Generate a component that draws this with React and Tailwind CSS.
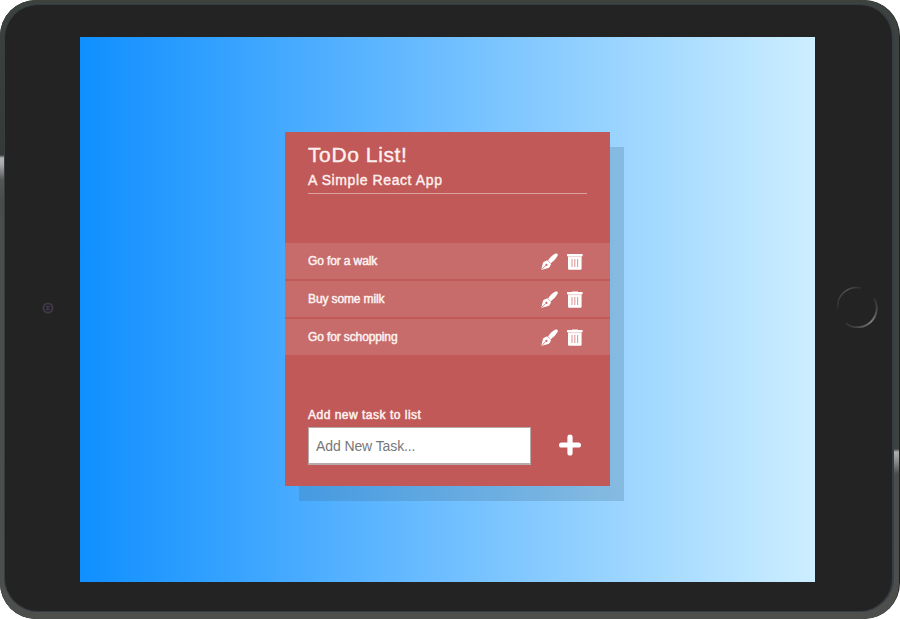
const tasks = ["Go for a walk", "Buy some milk", "Go for schopping"];

function PenIcon() {
  return (
    <svg className="mr-[9px]" width="17" height="17" viewBox="0 0 17 17" fill="none">
      <path d="M7 7.6C8.8 4.6 11.4 2 14 .8c1-.5 2.1-.4 2.5.1.4.5.4 1.4-.2 2.4-1.4 2.5-3.6 4.9-6.5 7z" fill="#fff" />
      <path d="M6.2 7.3l3.9 3.6-1.5 3.2c-.3.5-.7.8-1.3 1L.9 16.8l-.5-.5 1.5-6.2c.2-.7.6-1.1 1.2-1.4z" fill="#fff" />
      <path d="M.9 16.3l3.9-3.9" stroke="#c76c6a" strokeWidth=".8" />
      <circle cx="5.4" cy="11.9" r="1.1" fill="#c76c6a" />
    </svg>
  );
}

function TrashIcon({ handle }) {
  return (
    <svg width="16" height="17" viewBox="0 0 16 17" fill="none">
      {handle && <path d="M5 1.6V.3h6v1.3" fill="#fff" fillOpacity=".75" />}
      <rect x="0" y="1" width="15.6" height="2.2" rx=".5" fill="#fff" />
      <path d="M1 3.2h13.6v12.2c0 .9-.6 1.4-1.5 1.4H2.5c-.9 0-1.5-.5-1.5-1.4z" fill="#fff" />
      <path d="M1 3.7h13.6" stroke="#efc8c8" strokeWidth=".7" />
      <path d="M5 6v8M7.8 6v8M10.6 6v8" stroke="#dc9c9b" strokeWidth="1.1" />
    </svg>
  );
}

function TaskRow({ text, handle }) {
  return (
    <li className="flex h-[36px] items-center bg-[#c76c6a] pl-[23px] pr-[27px] text-[12px] tracking-[-0.12px] text-[#fff3f3]">
      <span className="flex-1 [-webkit-text-stroke:0.45px_#fff3f3]">{text}</span>
      <PenIcon />
      <TrashIcon handle={handle} />
    </li>
  );
}

function TodoCard() {
  return (
    <main className="mt-[95px] flex h-[354px] w-[325px] flex-col bg-[#c05957] shadow-[14px_15px_0_rgba(60,95,120,0.22)]">
      <header className="mx-[23px] h-[62px] border-b border-[#dea09f] pt-[10px] text-[#fff0f0]">
        <h1 className="text-[21px] leading-[25px] tracking-[0.6px] [-webkit-text-stroke:0.4px_#fff0f0]">ToDo List!</h1>
        <h2 className="mt-[4px] text-[14px] leading-[18px] tracking-[0.6px] [-webkit-text-stroke:0.4px_#fff0f0]">A Simple React App</h2>
      </header>
      <ul className="mt-[49px] flex flex-col gap-[2px]">
        {tasks.map((task, index) => (
          <TaskRow key={task} text={task} handle={index > 0} />
        ))}
      </ul>
      <form className="mt-[52px] pl-[23px]">
        <label htmlFor="task" className="block text-[12px] leading-[16px] tracking-[0.5px] text-[#fff0f0] [-webkit-text-stroke:0.5px_#fff0f0]">
          Add new task to list
        </label>
        <div className="mt-[4px] flex items-start">
          <input
            id="task"
            placeholder="Add New Task..."
            className="h-[38px] w-[223px] border border-b-2 border-[#b9aaaa] bg-white px-[7px] text-[14px] tracking-[-0.1px] outline-none placeholder:text-[#777777]"
          />
          <button type="button" aria-label="Add task" className="ml-[28px] mt-[7px]">
            <svg width="22" height="22" viewBox="0 0 22 22">
              <path d="M11 3v16M2.6 11h16.8" stroke="#fff" strokeWidth="5.2" strokeLinecap="round" />
            </svg>
          </button>
        </div>
      </form>
    </main>
  );
}

export default function App() {
  return (
    <div className="h-[619px] w-[900px] overflow-hidden bg-white font-['Liberation_Sans',Arial,sans-serif]">
      <div className="flex h-full w-full flex-col overflow-hidden rounded-[36px] bg-[#202221]">
        <div className="flex h-[619px] w-[899px] overflow-hidden rounded-[35px] bg-[linear-gradient(to_right,#3c423d_50%,transparent_50%),linear-gradient(#3c423d_0px,#3c423d_449px,#b0b0b0_452px,#8d8d8d_461px,#4b4d4b_474px,#4d4f4c_619px)]">
          <div className="flex w-full bg-[linear-gradient(#3c423d_0px,#343a36_155px,#b5b5b5_158px,#aaaaaa_164px,#555755_180px,#4b4d4a_200px,#4d4f4c_619px)] bg-[length:450px_619px] bg-no-repeat pb-[7px] pl-[4px] pr-[5px] pt-[4px]">
            <div className="flex w-full rounded-[34px] border border-r-2 border-[#373d45] bg-[#232323]">
              <aside className="flex w-[75px] items-start pl-[37px] pt-[297px]">
                <svg width="12" height="12" viewBox="0 0 12 12" fill="none">
                  <circle cx="6" cy="6" r="4.6" fill="#28222e" stroke="#3d3d40" strokeWidth="1.8" />
                  <path d="M4 4.7h3.6M4 7.2h3.6M5.8 4v4" stroke="#51405f" strokeWidth=".8" />
                </svg>
              </aside>
              <section className="mt-[32px] flex h-[545px] w-[735px] items-start bg-[linear-gradient(to_right,#108fff,#cdeeff)] pl-[205px]">
                <TodoCard />
              </section>
              <aside className="flex flex-1 items-start pl-[21px] pt-[281px]">
                <svg width="42" height="42" viewBox="0 0 42 42" fill="none">
                  <defs>
                    <linearGradient id="ringTop" x1="0" y1="21" x2="25" y2="0" gradientUnits="userSpaceOnUse">
                      <stop stopColor="#303030" />
                      <stop offset=".6" stopColor="#555555" />
                      <stop offset="1" stopColor="#2a2a2a" />
                    </linearGradient>
                    <linearGradient id="ringBottom" x1="38" y1="10" x2="10" y2="38" gradientUnits="userSpaceOnUse">
                      <stop stopColor="#2a2a2a" />
                      <stop offset=".5" stopColor="#7c7c7c" />
                      <stop offset="1" stopColor="#333333" />
                    </linearGradient>
                  </defs>
                  <path d="M1.7 22A19 19 0 0 1 25 2" stroke="url(#ringTop)" strokeWidth="1.4" />
                  <path d="M38 12A19.3 19.3 0 0 1 10 37.5" stroke="url(#ringBottom)" strokeWidth="1.9" />
                </svg>
              </aside>
            </div>
          </div>
        </div>
      </div>
    </div>
  );
}
